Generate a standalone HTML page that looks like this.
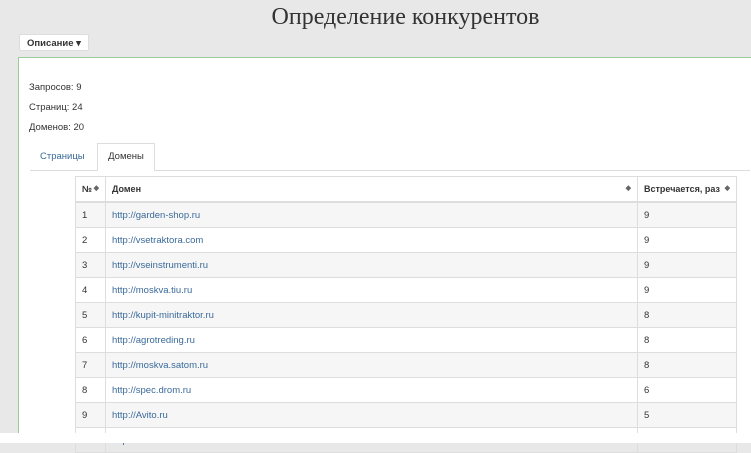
<!DOCTYPE html><html><head><meta charset="utf-8"><style>
body{margin:0;width:751px;height:442px;background:#e8e8e8;font-family:"Liberation Sans",sans-serif;font-size:10px;color:#333;overflow:hidden;position:relative}
.t{position:absolute;left:0;width:811px;text-align:center;top:4px;font-family:"Liberation Serif",serif;font-size:24px;color:#333}
.btn{position:absolute;left:19px;top:34px;width:70px;height:17px;background:#fff;border:1px solid #ddd;border-radius:2px;font-weight:bold;font-size:9.5px;line-height:17px;text-indent:7px;box-sizing:border-box}
.p{position:absolute;left:18px;top:57px;width:740px;height:376px;background:#fff;border-left:1px solid #9c9;border-top:1px solid #9c9}
.bot{position:absolute;left:0;top:433px;width:751px;height:10px;background:#fff;z-index:5}
.s{position:absolute;left:29px;font-size:9.5px}
.tl{position:absolute;left:30px;top:170px;width:720px;border-top:1px solid #ddd}
.tab{position:absolute;left:97px;top:143px;width:58px;height:28px;background:#fff;border:1px solid #ddd;border-bottom:none;box-sizing:border-box;text-align:center;line-height:26px;font-size:9.5px}
table{position:absolute;left:75px;top:176px;border-collapse:collapse;font-size:9.5px}
td,th{border:1px solid #ddd;height:24px;padding:0 6px;text-align:left}
th{border-bottom:2px solid #ddd;font-size:9px}
tr:nth-child(odd) td{background:#f6f6f6}
a{color:#3a6a9a;text-decoration:none}
.ar{float:right;font-size:7px;color:#666}
</style></head><body>
<div class="t">Определение конкурентов</div>
<div class="btn">Описание ▾</div>
<div class="p"></div>
<div class="s" style="top:82px">Запросов: 9</div>
<div class="s" style="top:102px">Страниц: 24</div>
<div class="s" style="top:122px">Доменов: 20</div>
<div class="tl"></div>
<div style="position:absolute;left:40px;top:151px;font-size:9.5px;color:#3a6a9a">Страницы</div>
<div class="tab">Домены</div>
<table>
<thead><tr><th style="width:17px">№ <span class="ar">◆</span></th><th style="width:519px">Домен <span class="ar">◆</span></th><th style="width:86px">Встречается, раз <span class="ar">◆</span></th></tr></thead>
<tbody>
<tr><td>1</td><td><a>http://garden-shop.ru</a></td><td>9</td></tr>
<tr><td>2</td><td><a>http://vsetraktora.com</a></td><td>9</td></tr>
<tr><td>3</td><td><a>http://vseinstrumenti.ru</a></td><td>9</td></tr>
<tr><td>4</td><td><a>http://moskva.tiu.ru</a></td><td>9</td></tr>
<tr><td>5</td><td><a>http://kupit-minitraktor.ru</a></td><td>8</td></tr>
<tr><td>6</td><td><a>http://agrotreding.ru</a></td><td>8</td></tr>
<tr><td>7</td><td><a>http://moskva.satom.ru</a></td><td>8</td></tr>
<tr><td>8</td><td><a>http://spec.drom.ru</a></td><td>6</td></tr>
<tr><td>9</td><td><a>http://Avito.ru</a></td><td>5</td></tr>
<tr><td>10</td><td><a>http://</a></td><td>5</td></tr>
</tbody></table>
<div class="bot"></div>
</body></html>
